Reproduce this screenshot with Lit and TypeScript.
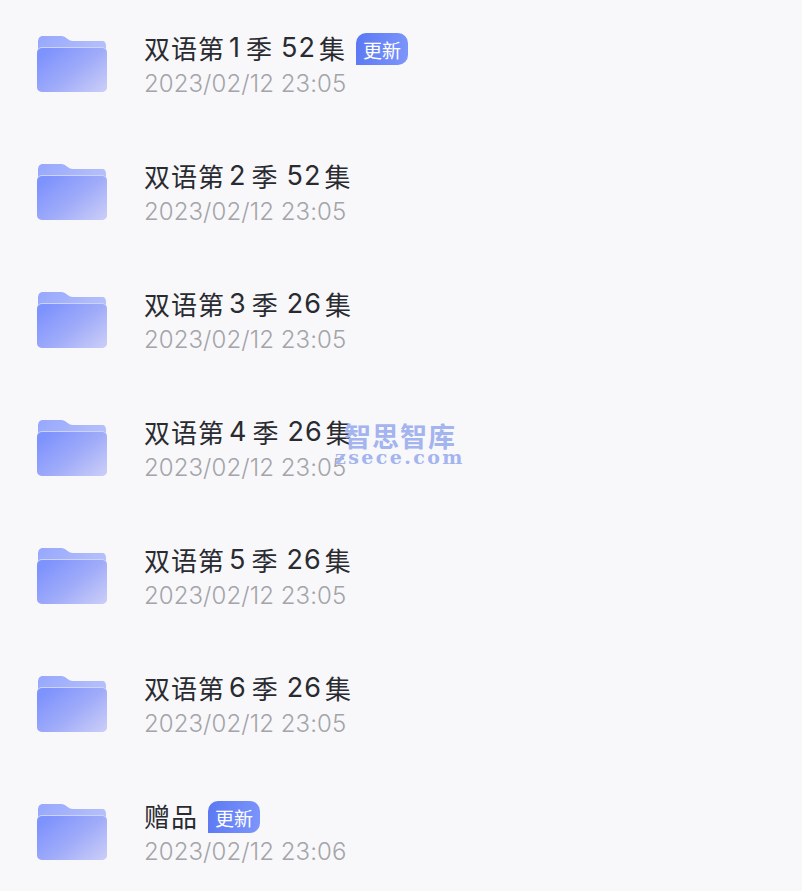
import { LitElement, html, css } from "lit";
import { customElement } from "lit/decorators.js";

const rows = [
  { a: "双语第", n: "1", b: "季", c: "52", d: "集", time: "2023/02/12 23:05", isNew: true },
  { a: "双语第", n: "2", b: "季", c: "52", d: "集", time: "2023/02/12 23:05" },
  { a: "双语第", n: "3", b: "季", c: "26", d: "集", time: "2023/02/12 23:05" },
  { a: "双语第", n: "4", b: "季", c: "26", d: "集", time: "2023/02/12 23:05" },
  { a: "双语第", n: "5", b: "季", c: "26", d: "集", time: "2023/02/12 23:05" },
  { a: "双语第", n: "6", b: "季", c: "26", d: "集", time: "2023/02/12 23:05" },
  { a: "赠品", time: "2023/02/12 23:06", isNew: true },
];

@customElement("app-root")
export class AppRoot extends LitElement {
  static styles = css`
    :host { display: block; height: 891px; overflow: hidden; background: #f8f8fb; position: relative;
      font-family: Inter, "Noto Sans CJK SC", sans-serif; }
    .row { height: 128px; display: flex; align-items: center; padding-left: 37px; box-sizing: border-box; }
    .folder { width: 70px; height: 58px; flex: none; display: block; }
    .text { margin-left: 37px; padding-top: 3px; display: flex; flex-direction: column; }
    .title { display: flex; align-items: center; height: 32px; margin-top: -1px; font-size: 26px; letter-spacing: 1px; color: #2a2b30; white-space: nowrap; }
    .num { margin: 0 6px 0 4px; letter-spacing: 0; font-size: 27px; }
    .sp { margin-left: 8px; margin-right: 3px; letter-spacing: 1px; font-size: 27px; }
    .tag { margin: 4px 0 0 10px; width: 52px; height: 32px; box-sizing: border-box; display: flex; align-items: center; justify-content: center;
      font-size: 19px; letter-spacing: 0; color: #fff; border-radius: 10px 10px 10px 0; background: linear-gradient(100deg, #5b78f3, #7d96fb); }
    .time { font-size: 24px; font-weight: 300; line-height: 30px; margin-top: 6px; color: #a4a4a9; letter-spacing: 0.07px; white-space: nowrap; }
    .mark { position: absolute; left: 335px; top: 420px; color: #a3b4ee; pointer-events: none; }
    .mark .cn { font-family: "Noto Sans CJK SC", serif; font-size: 27px; line-height: 32px; margin-left: 9px; letter-spacing: 1px; font-weight: 700; }
    .mark .en { font-family: "DejaVu Serif", serif; font-weight: 700; font-size: 19px; line-height: 10px; letter-spacing: 2.4px; }
  `;

  folder(i: number) {
    return html`<svg class="folder" viewBox="0 0 70 58" aria-hidden="true">
      <defs>
        <linearGradient id="back${i}" x1="0" y1="0" x2="1" y2="0.2">
          <stop offset="0" stop-color="#96a8fd" /><stop offset="1" stop-color="#b4bffb" />
        </linearGradient>
        <linearGradient id="front${i}" x1="0.05" y1="0.2" x2="1" y2="0.95">
          <stop offset="0" stop-color="#7f93fd" /><stop offset="0.5" stop-color="#a0acf9" /><stop offset="1" stop-color="#cbcdf7" />
        </linearGradient>
      </defs>
      <path fill="url(#back${i})" d="M1 7C1 3 3 1 6 1H24C27 1 28 2 30 3.500C32 5 33 6 36 6H65C68 6 69 8 69 11V24H1Z" />
      <rect x="0" y="12" width="70" height="45" rx="5" fill="#ccd2fb" />
      <rect x="0" y="13" width="70" height="44" rx="5" fill="url(#front${i})" />
    </svg>`;
  }

  render() {
    return html`
      ${rows.map((r, i) => html`
        <div class="row">
          ${this.folder(i)}
          <div class="text">
            <div class="title">
              <span>${r.a}</span>
              ${r.n ? html`<span class="num">${r.n}</span><span>${r.b}</span><span class="sp">${r.c}</span><span>${r.d}</span>` : null}
              ${r.isNew ? html`<span class="tag">更新</span>` : null}
            </div>
            <div class="time">${r.time}</div>
          </div>
        </div>`)}
      <div class="mark"><div class="cn">智思智库</div><div class="en">zsece.com</div></div>
    `;
  }
}
